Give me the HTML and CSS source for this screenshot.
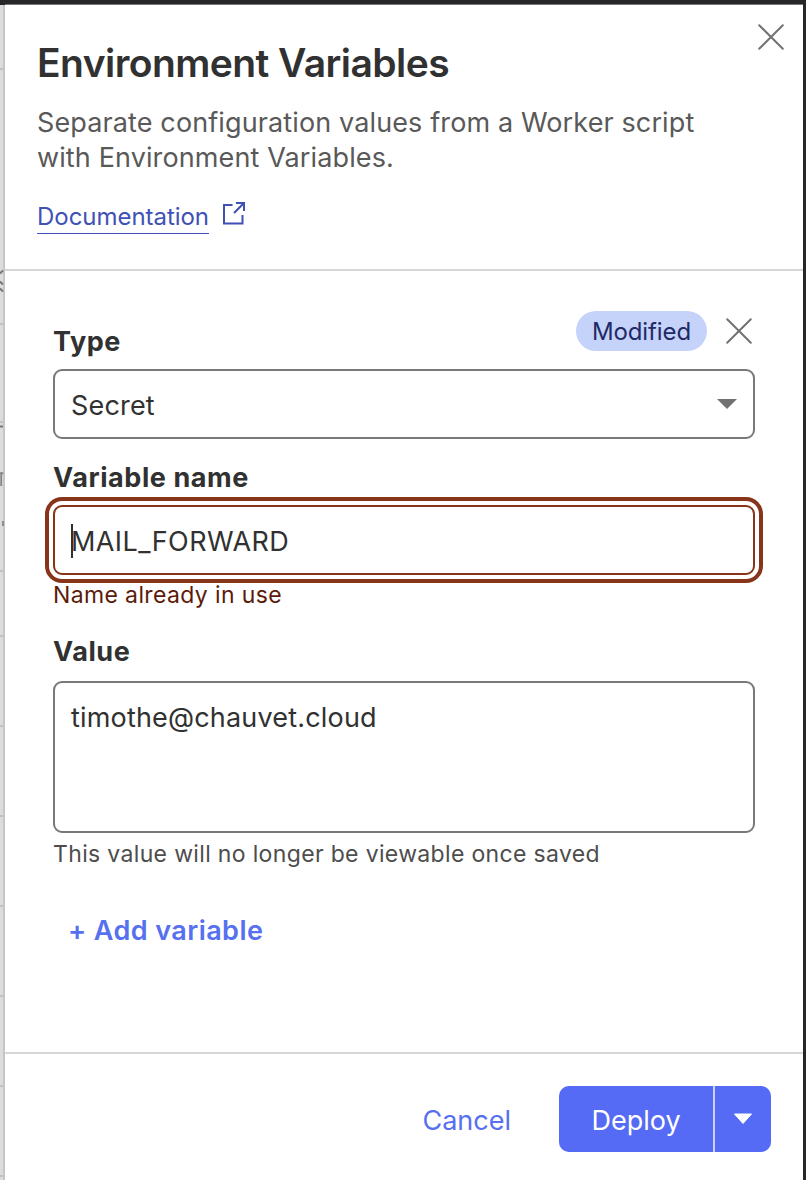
FILE: index.html
```
<!DOCTYPE html>
<html lang="en">
<head>
<meta charset="utf-8">
<title>Environment Variables</title>
<link rel="stylesheet" href="styles.css">
</head>
<body>
<div class="window">
  <svg class="backdrop" width="5" height="1175" viewBox="0 5 5 1175" aria-hidden="true">
    <rect x="0" y="5" width="3" height="1175" fill="#dcdcdc"/>
    <rect x="3" y="5" width="2" height="1175" fill="#c6c6c6"/>
    <path d="M0 69h3M0 324h3M0 422h3M0 571h3M0 636h3M0 726h3M0 816h3M0 906h3M0 996h3M0 1086h3M0 1176h3" stroke="#c2c2c2" stroke-width="2"/>
    <path d="M3 270.500L0 273.500M0 281.500L3 284.500M0 288.500L3 291.500M0 426.500h3" stroke="#777" stroke-width="2" fill="none"/>
    <path d="M0 473.500Q2 472 3 474M1.200 473v13M3 521v5" stroke="#858585" stroke-width="1.800" fill="none"/>
  </svg>
  <main class="panel">
    <header class="header">
      <div class="intro">
        <h1 class="title">Environment Variables</h1>
        <p class="description">Separate configuration values from a Worker script<br>with Environment Variables.</p>
        <a class="docs"><span class="docs-text">Documentation</span><svg class="external" width="26" height="26" viewBox="0 0 26 26"><path d="M11.500 5H3v18.500h18.500V15M15 3h8v8M22.500 3.500L13 13" fill="none" stroke="currentColor" stroke-width="2"/></svg></a>
      </div>
      <button class="icon-button close" aria-label="Close"><svg width="28" height="28" viewBox="0 0 28 28"><path d="M2.200 2.200l23.600 23.600M25.800 2.200L2.200 25.800" stroke="currentColor" stroke-width="2" stroke-linecap="round"/></svg></button>
    </header>
    <section class="form">
      <div class="type-row">
        <span class="label type-label">Type</span>
        <span class="badge">Modified</span>
        <button class="icon-button" aria-label="Remove"><svg width="28" height="28" viewBox="0 0 28 28"><path d="M2.200 2.200l23.600 23.600M25.800 2.200L2.200 25.800" stroke="currentColor" stroke-width="2" stroke-linecap="round"/></svg></button>
      </div>
      <div class="field select"><span class="secret">Secret</span><svg width="20" height="10" viewBox="0 0 20 10"><path d="M0 0h20L10 10z" fill="#727272"/></svg></div>
      <span class="label name-label">Variable name</span>
      <div class="field invalid"><span class="caret"></span><span class="name">MAIL_FORWARD</span></div>
      <span class="error">Name already in use</span>
      <span class="label value-label">Value</span>
      <div class="field textarea"><span class="email">timothe@chauvet.cloud</span></div>
      <span class="hint">This value will no longer be viewable once saved</span>
      <button class="add">+ Add variable</button>
    </section>
    <footer class="footer">
      <button class="cancel">Cancel</button>
      <div class="split">
        <button class="deploy">Deploy</button>
        <button class="more" aria-label="More"><svg width="20" height="12" viewBox="0 0 20 12"><path d="M1.500 1h17L10 10.500z" fill="#fff" stroke="#fff" stroke-linejoin="round"/></svg></button>
      </div>
    </footer>
  </main>
</div>
</body>
</html>
```

FILE: styles.css
```
* { box-sizing: border-box; }
body { margin: 0; background: #27272a; font-family: Inter, "Liberation Sans", sans-serif; color: #313131; }
button { border: 0; padding: 0; background: none; font: inherit; color: inherit; }
svg { display: block; flex: none; }
.window { display: flex; height: 1180px; padding: 4px 3px 0 0; overflow: hidden; background: #27272a; }
.backdrop { margin-top: 1px; }
.panel { flex: 1; display: flex; flex-direction: column; background: #fff; border-top: 1px solid #777; }
.header { display: flex; justify-content: space-between; height: 266px; padding: 33px 18px 0 32px; border-bottom: 2px solid #d6d6d6; }
.title { margin: 0; font-size: 39px; line-height: 50px; font-weight: 600; letter-spacing: -0.56px; white-space: nowrap; }
.description { margin: 17px 0 0; font-size: 27px; line-height: 35px; letter-spacing: .12px; color: #595959; white-space: nowrap; }
.docs { display: flex; align-items: flex-start; gap: 12px; margin-top: 24px; color: #4051b5; }
.docs-text { padding-top: 2px; font-size: 24px; line-height: 32px; border-bottom: 1px solid #4051b5; letter-spacing: -.04px; }
.external { margin-top: 1px; }
.icon-button { color: #727272; }
.close { align-self: flex-start; margin-top: -15px; }
.form { flex: 1; display: flex; flex-direction: column; padding: 40px 48px 0; }
.type-row { display: flex; align-items: center; height: 40px; margin-bottom: 18px; padding-right: 2px; }
.label { font-size: 27px; line-height: 36px; font-weight: 700; letter-spacing: .58px; white-space: nowrap; }
.type-label { flex: 1; padding-top: 22px; }
.badge { width: 131px; height: 40px; border-radius: 20px; background: #c5d3fb; color: #1f2a66; font-size: 24px; line-height: 42px; letter-spacing: -.1px; text-align: center; margin-right: 18px; }
.field { display: flex; align-items: center; width: 702px; height: 70px; padding: 4px 16px 0; border: 2px solid #797979; border-radius: 9px; font-size: 27px; line-height: 36px; letter-spacing: .18px; }
.select { justify-content: space-between; padding-top: 0; }
.secret { padding-top: 4px; }
.name-label { margin-top: 21px; margin-bottom: 9px; }
.invalid { border-color: #86341a; outline: 4px solid #86341a; outline-offset: 4px; }
.caret { width: 2px; height: 34px; margin-top: -3px; background: #313131; margin-right: -2px; }
.name { letter-spacing: .4px; }
.error { margin-top: 5px; font-size: 23px; line-height: 30px; letter-spacing: .37px; color: #5c1b0a; }
.value-label { margin-top: 24px; margin-bottom: 11px; }
.textarea { height: 152px; align-items: flex-start; padding-top: 17px; }
.hint { margin-top: 6px; font-size: 23px; line-height: 30px; letter-spacing: .34px; color: #4d4d4d; }
.add { align-self: flex-start; margin: 44px 0 0 15px; font-size: 27px; line-height: 36px; font-weight: 600; letter-spacing: .43px; color: #5670ef; }
.footer { display: flex; justify-content: flex-end; height: 128px; padding: 32px 32px 0; border-top: 2px solid #d6d6d6; font-size: 27px; }
.cancel { margin-right: 48px; color: #5670ef; height: 68px; }
.split { display: flex; gap: 2px; width: 212px; height: 66px; border-radius: 10px; overflow: hidden; background: #cbd2f8; }
.deploy { flex: 1; background: #556bf5; color: #fff; padding-top: 2px; }
.more { display: flex; align-items: center; justify-content: center; width: 56px; background: #556bf5; }
```
